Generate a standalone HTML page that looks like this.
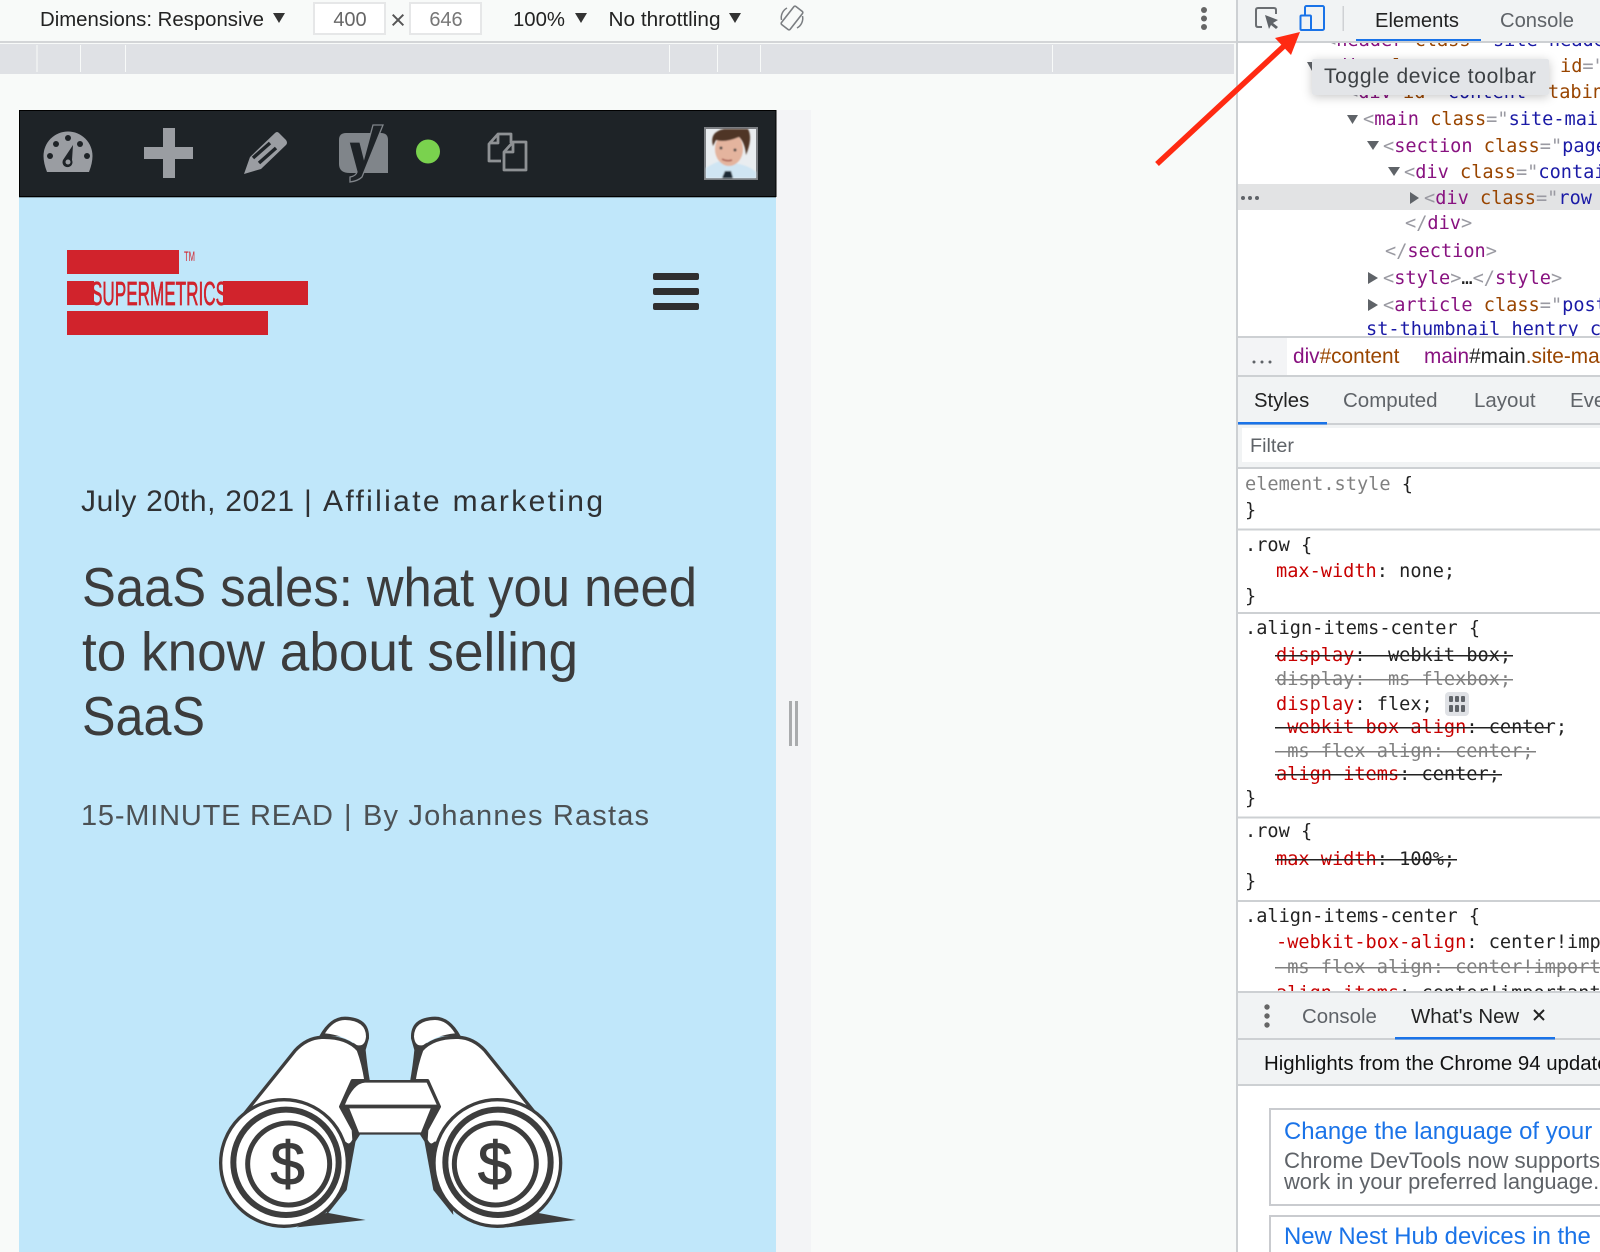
<!DOCTYPE html>
<html><head><meta charset="utf-8"><title>Toggle device toolbar</title>
<style>
html,body{margin:0;padding:0;width:1600px;height:1252px;overflow:hidden;background:#f8faf9}
svg{display:block}
text{white-space:pre}
.s{font-family:"Liberation Sans",Arial,sans-serif}
.m{font-family:"DejaVu Sans Mono","Liberation Mono",monospace;font-size:18.6px;fill:#222}
.tg{fill:#881280}.an{fill:#994500}.av{fill:#1a1aa6}.pn{fill:#9a9aa2}
.r{fill:#c80000}.g{fill:#808080}
.tb{font-size:20.5px;fill:#5f6368}
</style></head><body>
<svg xmlns="http://www.w3.org/2000/svg" width="1600" height="1252" viewBox="0 0 1600 1252">
<defs>
<clipPath id="elc"><rect x="1238" y="41" width="362" height="295"/></clipPath>
<clipPath id="stc"><rect x="1238" y="470" width="362" height="521"/></clipPath>
<filter id="sh" x="-10%" y="-30%" width="120%" height="170%"><feDropShadow dx="0" dy="2" stdDeviation="5" flood-color="#000" flood-opacity=".22"/></filter>
<filter id="bl"><feGaussianBlur stdDeviation=".7"/></filter>
</defs>
<rect width="1600" height="1252" fill="#f8faf9"/>

<!-- top toolbar -->
<rect x="0" y="41" width="1237" height="2" fill="#d3d5d7"/>
<rect x="0" y="44" width="1234" height="30" fill="#dfe1e5"/>
<g fill="#f8faf9"><rect x="36.5" y="45" width="1" height="27"/><rect x="80" y="45" width="1" height="27"/><rect x="125" y="45" width="1" height="27"/><rect x="669" y="45" width="1" height="27"/><rect x="717" y="45" width="1" height="27"/><rect x="760" y="45" width="1" height="27"/><rect x="1052" y="45" width="1" height="27"/></g>
<text class="s" x="40" y="26" font-size="20.5" fill="#222" textLength="224" lengthAdjust="spacingAndGlyphs">Dimensions: Responsive</text>
<polygon points="273,13 285,13 279,23" fill="#333"/>
<rect x="314" y="3" width="71" height="31" fill="#fff" stroke="#e6e7e8" stroke-width="2"/>
<text class="s" x="350" y="26" font-size="20" fill="#666" text-anchor="middle">400</text>
<text class="s" x="398" y="29" font-size="27" fill="#555" text-anchor="middle">×</text>
<rect x="410" y="3" width="71" height="31" fill="#fff" stroke="#e6e7e8" stroke-width="2"/>
<text class="s" x="446" y="26" font-size="20" fill="#777" text-anchor="middle">646</text>
<text class="s" x="513" y="26" font-size="20.5" fill="#222" textLength="52" lengthAdjust="spacingAndGlyphs">100%</text>
<polygon points="575,13 587,13 581,23" fill="#333"/>
<text class="s" x="608.500" y="26" font-size="20.5" fill="#222" textLength="112" lengthAdjust="spacingAndGlyphs">No throttling</text>
<polygon points="729,13 741,13 735,23" fill="#333"/>
<g transform="translate(792 18) rotate(38)" fill="none" stroke="#7b7e82" stroke-width="1.6"><rect x="-5.5" y="-11.5" width="11" height="23" rx="1.5"/></g>
<path d="M787 8A11 11 0 0 0 781.500 20M797 28A11 11 0 0 0 802.500 16" fill="none" stroke="#7b7e82" stroke-width="1.5"/>
<g fill="#666"><circle cx="1204" cy="10" r="3"/><circle cx="1204" cy="18.500" r="3"/><circle cx="1204" cy="27" r="3"/></g>

<!-- device page -->
<rect x="776" y="110" width="35" height="1142" fill="#f3f4f6"/>
<rect x="789" y="701" width="3" height="45" fill="#a9abad"/><rect x="795" y="701" width="3" height="45" fill="#a9abad"/>
<rect x="19" y="197" width="757" height="1055" fill="#c0e7fa"/>
<rect x="19" y="110" width="757" height="87" fill="#1e2327"/>
<rect x="19" y="110" width="757" height="1" fill="#000"/><rect x="19" y="196" width="757" height="1.300" fill="#000"/>
<rect x="19" y="110" width="1" height="87" fill="#000"/><rect x="775.500" y="110" width="1" height="87" fill="#000"/>

<!-- admin icons -->
<path d="M47 172Q43.500 163 43.500 156A24.500 24.500 0 0 1 92.500 156Q92.500 163 89 172Z" fill="#9a9da2"/>
<g fill="#1e2327"><circle cx="50" cy="156" r="3"/><circle cx="56" cy="144" r="3"/><circle cx="68" cy="138" r="3"/><circle cx="80" cy="144" r="3"/><circle cx="87" cy="156" r="3"/>
<path d="M73 145L72 160A5 5 0 1 1 63 160Z"/></g><circle cx="68" cy="162" r="2.500" fill="#9a9da2"/>
<path d="M144 147H163V128H175V147H193V159H175V178H163V159H144Z" fill="#9a9da2"/>
<path d="M244 174L250 157L275 133Q277 131 279 133L286 140Q288 143 286 145L261 169Z" fill="#9a9da2"/>
<path d="M253 158L270 143M259 163L276 148" stroke="#1e2327" stroke-width="3.500" fill="none"/>
<path d="M346 133H381Q388 133 388 140V173H350Q339 173 339 164V140Q339 133 346 133Z" fill="#80858a"/>
<path d="M373 125H383L362 177Q358 181 350 182V177Q356 176 357 172L349 142H360L364 158Z" fill="#1e2327" stroke="#80858a" stroke-width="1.300"/>
<circle cx="428" cy="151.500" r="12" fill="#7ad24e"/>
<g fill="none" stroke="#8e9194" stroke-width="2.800" stroke-linejoin="round">
<path d="M501 161H489V144L498 134H511V143"/><path d="M498 134V143H489"/>
<path d="M504 170H526V142H513L504 152ZM513 142V152H504"/></g>

<!-- avatar -->
<rect x="704" y="127" width="54" height="53" fill="#7d8084"/>
<rect x="706" y="129" width="50" height="49" fill="#e9edf0"/>
<g filter="url(#bl)">
<path d="M706 178V168Q715 162 724 160L734 163Q748 165 756 172V178Z" fill="#cfe5f3"/>
<ellipse cx="729" cy="149" rx="14" ry="17" fill="#e4b49e"/>
<path d="M713 146Q709 132 724 129H748Q753 138 746 155Q745 143 739 137Q725 143 716 140Z" fill="#4f3625"/>
<path d="M725 171L731 171L733 178H722Z" fill="#1e2b35"/>
<circle cx="721" cy="148" r="1.500" fill="#444"/><circle cx="735" cy="150" r="1.500" fill="#444"/>
<path d="M722 159Q727 162 732 160" stroke="#a5584e" stroke-width="1.500" fill="none"/>
</g>

<!-- logo -->
<g fill="#d1232c"><rect x="67" y="250" width="112" height="24"/><rect x="67" y="281" width="241" height="24"/><rect x="67" y="311" width="201" height="24"/></g>
<rect x="94" y="281" width="129" height="24" fill="#c0e7fa"/>
<text class="s" x="91" y="305" font-size="33" fill="#d1232c" stroke="#d1232c" stroke-width=".7" textLength="136" lengthAdjust="spacingAndGlyphs">SUPERMETRICS</text>
<text class="s" x="184" y="261" font-size="14" fill="#d1232c" textLength="11" lengthAdjust="spacingAndGlyphs">TM</text>
<g fill="#2f2f2f"><rect x="653" y="273" width="46" height="7" rx="2"/><rect x="653" y="288" width="46" height="7" rx="2"/><rect x="653" y="303" width="46" height="7" rx="2"/></g>

<!-- article text -->
<g class="s" font-size="30" fill="#2f3133">
<text x="81" y="511" textLength="213" lengthAdjust="spacing">July 20th, 2021</text>
<text x="304" y="511">|</text>
<text x="323" y="511" textLength="280" lengthAdjust="spacing">Affiliate marketing</text>
</g>
<g class="s" font-size="55" fill="#3c3c3c">
<text x="82" y="606" textLength="615" lengthAdjust="spacingAndGlyphs">SaaS sales: what you need</text>
<text x="82" y="670.500" textLength="496" lengthAdjust="spacingAndGlyphs">to know about selling</text>
<text x="82" y="735" textLength="123" lengthAdjust="spacingAndGlyphs">SaaS</text>
</g>
<g class="s" font-size="29" fill="#4c5154">
<text x="81" y="825" textLength="252" lengthAdjust="spacing">15-MINUTE READ</text>
<text x="344" y="825">|</text>
<text x="363" y="825" textLength="286" lengthAdjust="spacing">By Johannes Rastas</text>
</g>

<!-- binoculars -->
<g transform="translate(190 1000) scale(.33333)">
<g fill="#3d3d3d">
<polygon points="410,638 527,660 320,682"/><polygon points="1040,638 1158,660 950,682"/>
<polygon points="502,395 470,570 410,645 430,420"/><polygon points="698,395 730,570 790,645 770,420"/>
<path d="M388 108Q420 50 465 50Q540 52 537 115L527 150Q532 200 540 245H490V110Z"/>
<path d="M812 108Q780 50 735 50Q660 52 663 115L673 150Q668 200 660 245H710V110Z"/>
<polygon points="448,316 490,435 510,404 690,404 710,435 752,316"/>
</g>
<g fill="#fff">
<path d="M405 100Q430 60 465 60Q528 62 528 110Q525 142 500 135Q460 105 405 100Z"/>
<path d="M795 100Q770 60 735 60Q672 62 672 110Q675 142 700 135Q740 105 795 100Z"/>
</g>
<g fill="#fff" stroke="#3d3d3d" stroke-width="10" stroke-linejoin="round">
<path d="M120 395L315 152Q350 114 395 112Q470 110 505 150Q520 190 528 242L487 242L452 320L490 390L492 420Q480 445 465 430Z"/>
<path d="M1080 395L885 152Q850 114 805 112Q730 110 695 150Q680 190 672 242L713 242L748 320L710 390L708 420Q720 445 735 430Z"/>
</g>
<path d="M507 397H693L722 325H478Z" fill="#fff"/>
<polygon points="487,240 715,240 752,320 450,320" fill="#3d3d3d"/>
<path d="M465 314Q490 250 525 248H710L740 314Z" fill="#fff"/>
<g fill="#fff" stroke="#3d3d3d" stroke-width="10">
<circle cx="282" cy="489" r="190"/><circle cx="922" cy="489" r="190"/>
</g>
<g fill="none" stroke="#3d3d3d">
<circle cx="288" cy="487" r="158" stroke-width="18"/><circle cx="924" cy="487" r="158" stroke-width="18"/>
<circle cx="296" cy="492" r="123" stroke-width="15" fill="#fff"/><circle cx="916" cy="492" r="123" stroke-width="15" fill="#fff"/>
</g>
<g class="s" font-size="185" fill="#3d3d3d" text-anchor="middle" stroke="#3d3d3d" stroke-width="3">
<text x="293" y="555">$</text><text x="915" y="555">$</text>
</g>
</g>

<!-- devtools -->
<rect x="1238" y="41" width="362" height="1211" fill="#fff"/>
<rect x="1236" y="0" width="2" height="1252" fill="#cdd0d3"/>

<g clip-path="url(#elc)">
<rect x="1238" y="184" width="362" height="26" fill="#e2e3e4"/>
<g class="m">
<text x="1325" y="46"><tspan class="pn">&lt;</tspan><tspan class="tg">header</tspan> <tspan class="an">class</tspan><tspan class="pn">="</tspan><tspan class="av">site-heade</tspan></text>
<text x="1325" y="72"><tspan class="pn">&lt;</tspan><tspan class="tg">div</tspan> <tspan class="an">class</tspan></text>
<text x="1560" y="72"><tspan class="an">id</tspan><tspan class="pn">="</tspan></text>
<text x="1347" y="98"><tspan class="pn">&lt;</tspan><tspan class="tg">div</tspan> <tspan class="an">id</tspan><tspan class="pn">="</tspan><tspan class="av">content</tspan><tspan class="pn">"</tspan></text>
<text x="1548" y="98" class="an">tabin</text>
<text x="1363" y="125"><tspan class="pn">&lt;</tspan><tspan class="tg">main</tspan> <tspan class="an">class</tspan><tspan class="pn">="</tspan><tspan class="av">site-mai</tspan></text>
<text x="1383" y="152"><tspan class="pn">&lt;</tspan><tspan class="tg">section</tspan> <tspan class="an">class</tspan><tspan class="pn">="</tspan><tspan class="av">page</tspan></text>
<text x="1404" y="178"><tspan class="pn">&lt;</tspan><tspan class="tg">div</tspan> <tspan class="an">class</tspan><tspan class="pn">="</tspan><tspan class="av">contai</tspan></text>
<text x="1424" y="204"><tspan class="pn">&lt;</tspan><tspan class="tg">div</tspan> <tspan class="an">class</tspan><tspan class="pn">="</tspan><tspan class="av">row</tspan></text>
<text x="1405" y="229"><tspan class="pn">&lt;/</tspan><tspan class="tg">div</tspan><tspan class="pn">&gt;</tspan></text>
<text x="1385" y="257"><tspan class="pn">&lt;/</tspan><tspan class="tg">section</tspan><tspan class="pn">&gt;</tspan></text>
<text x="1383" y="284"><tspan class="pn">&lt;</tspan><tspan class="tg">style</tspan><tspan class="pn">&gt;</tspan><tspan>…</tspan><tspan class="pn">&lt;/</tspan><tspan class="tg">style</tspan><tspan class="pn">&gt;</tspan></text>
<text x="1383" y="311"><tspan class="pn">&lt;</tspan><tspan class="tg">article</tspan> <tspan class="an">class</tspan><tspan class="pn">="</tspan><tspan class="av">post</tspan></text>
<text x="1366" y="335" class="av">st-thumbnail hentry c</text>
</g>
<g fill="#5f6368">
<polygon points="1347,115 1358,115 1352.500,124"/><polygon points="1367,141 1379,141 1373,150"/><polygon points="1388,167 1400,167 1394,176"/>
<polygon points="1410,192 1419,198 1410,204"/><polygon points="1368,272 1378,278 1368,284"/><polygon points="1368,299 1378,305 1368,311"/>
<polygon points="1307,62 1318,62 1312,71"/>
<circle cx="1243" cy="198" r="2"/><circle cx="1250" cy="198" r="2"/><circle cx="1257" cy="198" r="2"/>
</g>
</g>

<!-- devtools top toolbar -->
<rect x="1238" y="0" width="362" height="41" fill="#f1f3f4"/>
<rect x="1238" y="41" width="362" height="2" fill="#cdd0d3"/>
<path d="M1262 27H1258Q1256 27 1256 25V10Q1256 8 1258 8H1274Q1276 8 1276 10V14" fill="none" stroke="#6b6e72" stroke-width="2"/>
<path d="M1265 15L1278 20L1273 23L1278 27L1276 29L1271 25L1269 29Z" fill="#5f6368"/>
<rect x="1305" y="6" width="19" height="24" rx="1.500" fill="none" stroke="#1a73e8" stroke-width="2"/>
<rect x="1300.500" y="15.500" width="10.500" height="14.500" rx="1" fill="#f1f3f4" stroke="#1a73e8" stroke-width="2"/>
<rect x="1342.500" y="6" width="1.500" height="25" fill="#cfd1d4"/>
<text class="s" x="1375" y="27" font-size="20" fill="#222" textLength="84" lengthAdjust="spacingAndGlyphs">Elements</text>
<text class="s" x="1500" y="27" font-size="20" fill="#5f6368" textLength="74" lengthAdjust="spacingAndGlyphs">Console</text>
<rect x="1356" y="39" width="125" height="2" fill="#1a73e8"/>

<!-- tooltip -->
<rect x="1312" y="59" width="237" height="36" rx="2" fill="#e3e5e8" filter="url(#sh)"/>
<text class="s" x="1324" y="83" font-size="21" fill="#3c4043" textLength="212" lengthAdjust="spacing">Toggle device toolbar</text>

<!-- arrow -->
<path d="M1157 164L1284 46" stroke="#ff2a12" stroke-width="5.500" fill="none"/>
<polygon points="1300,32 1275,38 1291,55" fill="#ff2a12"/>

<!-- breadcrumb -->
<rect x="1238" y="336" width="362" height="2" fill="#cdd0d3"/>
<rect x="1238" y="338" width="49" height="37" fill="#f3f4f6"/>
<g fill="#5f6368"><circle cx="1254" cy="362" r="1.500"/><circle cx="1262" cy="362" r="1.500"/><circle cx="1270" cy="362" r="1.500"/></g>
<text class="s" x="1293" y="363" font-size="20.800"><tspan class="tg">div</tspan><tspan class="an">#content</tspan></text>
<text class="s" x="1424" y="363" font-size="20.800"><tspan class="tg">main</tspan><tspan fill="#222">#main</tspan><tspan class="an">.site-mai</tspan></text>

<!-- styles tabs -->
<rect x="1238" y="375" width="362" height="2" fill="#cdd0d3"/>
<rect x="1238" y="377" width="362" height="91" fill="#f1f3f4"/>
<rect x="1238" y="423" width="362" height="2" fill="#cdd0d3"/>
<rect x="1238" y="422" width="89" height="2.500" fill="#1a73e8"/>
<g class="s">
<text x="1254" y="407" font-size="20.300" fill="#222">Styles</text>
<text x="1343" y="407" class="tb">Computed</text>
<text x="1474" y="407" class="tb">Layout</text>
<text x="1570" y="407" class="tb">Eve</text>
</g>
<rect x="1242" y="428" width="358" height="34" fill="#fff"/>
<text class="s" x="1250" y="452" font-size="19.800" fill="#5f6368">Filter</text>
<rect x="1238" y="467" width="362" height="2" fill="#cdd0d3"/>

<!-- styles -->
<g clip-path="url(#stc)">
<g class="m">
<text x="1245" y="490"><tspan class="g">element.style</tspan> {</text>
<text x="1245" y="516">}</text>
<text x="1245" y="551">.row {</text>
<text x="1276" y="577"><tspan class="r">max-width</tspan>: none;</text>
<text x="1245" y="602">}</text>
<text x="1245" y="634">.align-items-center {</text>
<text x="1276" y="661"><tspan class="r">display</tspan>: -webkit-box;</text>
<text x="1276" y="685" class="g">display: -ms-flexbox;</text>
<text x="1276" y="710"><tspan class="r">display</tspan>: flex;</text>
<text x="1276" y="733"><tspan class="r">-webkit-box-align</tspan>: center;</text>
<text x="1276" y="757" class="g">-ms-flex-align: center;</text>
<text x="1276" y="780"><tspan class="r">align-items</tspan>: center;</text>
<text x="1245" y="804">}</text>
<text x="1245" y="837">.row {</text>
<text x="1276" y="865"><tspan class="r">max-width</tspan>: 100%;</text>
<text x="1245" y="887">}</text>
<text x="1245" y="922">.align-items-center {</text>
<text x="1276" y="948"><tspan class="r">-webkit-box-align</tspan>: center!important;</text>
<text x="1276" y="973" class="g">-ms-flex-align: center!important;</text>
<text x="1276" y="999"><tspan class="r">align-items</tspan>: center!important;</text>
</g>
<g fill="#222">
<rect x="1275" y="655" width="238" height="1.500"/>
<rect x="1275" y="727" width="273" height="1.500"/>
<rect x="1275" y="774" width="227" height="1.500"/>
<rect x="1275" y="859" width="182" height="1.500"/>
</g>
<g fill="#808080">
<rect x="1275" y="679" width="238" height="1.500"/>
<rect x="1275" y="751" width="261" height="1.500"/>
<rect x="1275" y="967" width="325" height="1.500"/>
</g>
</g>
<g fill="#cdd0d3">
<rect x="1238" y="528.500" width="362" height="2"/>
<rect x="1238" y="612" width="362" height="2"/>
<rect x="1238" y="816.500" width="362" height="2"/>
<rect x="1238" y="900" width="362" height="2"/>
</g>
<rect x="1445" y="692" width="24" height="24" rx="4" fill="#dfe1e5"/>
<g fill="#5f6368"><rect x="1449" y="696" width="4" height="6" rx="1"/><rect x="1455" y="696" width="4" height="6" rx="1"/><rect x="1461" y="696" width="4" height="6" rx="1"/><rect x="1449" y="705" width="4" height="7" rx="1"/><rect x="1455" y="705" width="4" height="7" rx="1"/><rect x="1461" y="705" width="4" height="7" rx="1"/></g>

<!-- drawer -->
<rect x="1238" y="991" width="362" height="48" fill="#f1f3f4"/>
<rect x="1238" y="991" width="362" height="2" fill="#cdd0d3"/>
<rect x="1238" y="1038" width="362" height="2" fill="#cdd0d3"/>
<g fill="#666"><circle cx="1267" cy="1007" r="2.700"/><circle cx="1267" cy="1016" r="2.700"/><circle cx="1267" cy="1025" r="2.700"/></g>
<text class="s" x="1302" y="1023" font-size="20.400" fill="#5f6368">Console</text>
<text class="s" x="1411" y="1023" font-size="20.400" fill="#222">What's New</text>
<path d="M1534 1010L1544 1020M1544 1010L1534 1020" stroke="#222" stroke-width="2"/>
<rect x="1395" y="1037" width="160" height="2.500" fill="#1a73e8"/>
<rect x="1238" y="1040" width="362" height="44" fill="#f1f3f4"/>
<text class="s" x="1264" y="1070" font-size="20.400" fill="#111">Highlights from the Chrome 94 update</text>
<rect x="1238" y="1084" width="362" height="2" fill="#cdd0d3"/>
<rect x="1270" y="1109" width="340" height="96" fill="#fff" stroke="#c9cbcf" stroke-width="2"/>
<text class="s" x="1284" y="1139" font-size="23.900" fill="#1a73e8">Change the language of your</text>
<text class="s" x="1284" y="1168" font-size="22.300" fill="#5f6368">Chrome DevTools now supports</text>
<text class="s" x="1284" y="1189" font-size="21.900" fill="#5f6368">work in your preferred language.</text>
<rect x="1270" y="1216" width="340" height="60" fill="#fff" stroke="#c9cbcf" stroke-width="2"/>
<text class="s" x="1284" y="1244" font-size="23.900" fill="#1a73e8">New Nest Hub devices in the</text>
</svg>
</body></html>
